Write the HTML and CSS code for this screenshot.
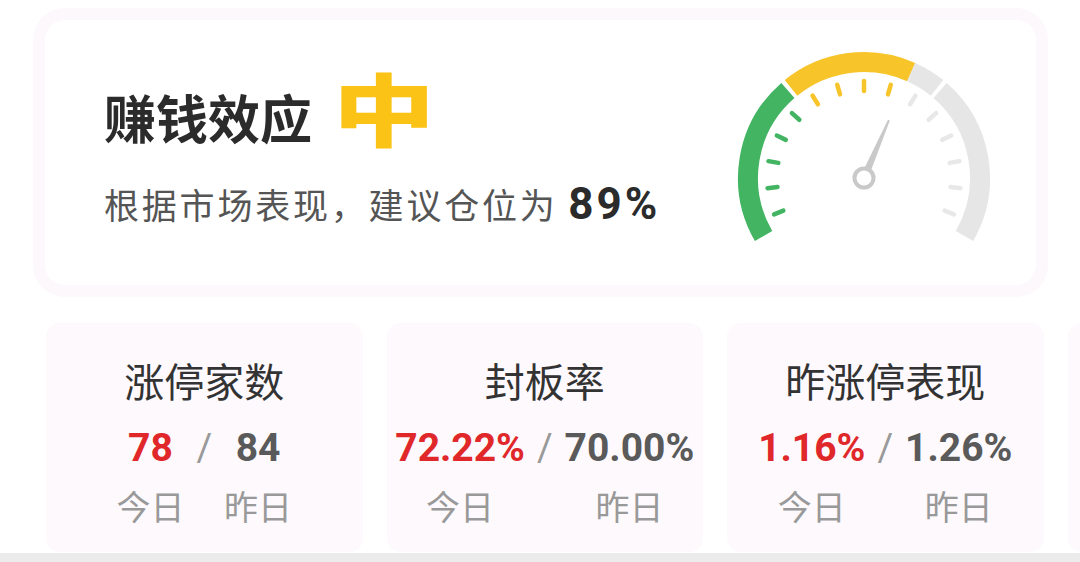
FILE: index.html
```html
<!DOCTYPE html>
<html>
    <head>
        <meta charset = utf-8>
        <meta name = viewport content = 'width = device-width, initial-scale = 1'>
        <title>赚钱效应</title>

        <link rel="stylesheet" href="styles.css">
    </head>

    <body>
        <section class = effect-wrap>
            <div class = effect>
                <div class = effect-text>
                    <div class = title-row>
                        <h1 class = title>赚钱效应</h1>
                        <span class = level>中</span>
                    </div>
                    <p class = advice>根据市场表现，建议仓位为 <b class = percent>89%</b></p>
                </div>

                <svg class = gauge width = 260 height = 200 viewBox = '0 0 260 200'>
                    <g fill = none stroke-width = 20>
                        <path d = 'M29.54 188 A116 116 0 0 1 53.89 42.45' stroke = '#42b462' />
                        <path d = 'M57.00 39.86 A116 116 0 0 1 177.18 24.03' stroke = '#f7c42a' />
                        <path d = 'M177.18 24.03 A116 116 0 0 1 203.00 39.86' stroke = '#e6e6e6' />
                        <path d = 'M206.11 42.45 A116 116 0 0 1 230.46 188' stroke = '#e6e6e6' />
                    </g>
                    <g stroke-width = '4.5' stroke-linecap = round>
                        <g stroke = '#42b462'>
                            <line x1 = '130' y1 = '33' x2 = '130' y2 = '43' transform = 'rotate(-112 130 130)' />
                            <line x1 = '130' y1 = '33' x2 = '130' y2 = '43' transform = 'rotate(-96 130 130)' />
                            <line x1 = '130' y1 = '33' x2 = '130' y2 = '43' transform = 'rotate(-80 130 130)' />
                            <line x1 = '130' y1 = '33' x2 = '130' y2 = '43' transform = 'rotate(-64 130 130)' />
                            <line x1 = '130' y1 = '33' x2 = '130' y2 = '43' transform = 'rotate(-48 130 130)' />
                        </g>
                        <g stroke = '#f7c42a'>
                            <line x1 = '130' y1 = '33' x2 = '130' y2 = '43' transform = 'rotate(-32 130 130)' />
                            <line x1 = '130' y1 = '33' x2 = '130' y2 = '43' transform = 'rotate(-16 130 130)' />
                            <line x1 = '130' y1 = '33' x2 = '130' y2 = '43' />
                            <line x1 = '130' y1 = '33' x2 = '130' y2 = '43' transform = 'rotate(16 130 130)' />
                        </g>
                        <g stroke = '#e8e8e8'>
                            <line x1 = '130' y1 = '33' x2 = '130' y2 = '43' transform = 'rotate(32 130 130)' />
                            <line x1 = '130' y1 = '33' x2 = '130' y2 = '43' transform = 'rotate(48 130 130)' />
                            <line x1 = '130' y1 = '33' x2 = '130' y2 = '43' transform = 'rotate(64 130 130)' />
                            <line x1 = '130' y1 = '33' x2 = '130' y2 = '43' transform = 'rotate(80 130 130)' />
                            <line x1 = '130' y1 = '33' x2 = '130' y2 = '43' transform = 'rotate(96 130 130)' />
                            <line x1 = '130' y1 = '33' x2 = '130' y2 = '43' transform = 'rotate(112 130 130)' />
                        </g>
                    </g>
                    <polygon points = '126.5 121 133.5 121 131 67 129 67' fill = '#c9c9c9' transform = 'rotate(23.3 130 130)' />
                    <circle cx = '130' cy = '130' r = '9.5' fill = '#fff' stroke = '#c9c9c9' stroke-width = '4' />
                </svg>
            </div>
        </section>

        <div class = stats>
            <div class = card>
                <h3 class = card-title>涨停家数</h3>
                <div class = values>
                    <div class = col><span class = 'num up'>78</span><span class = label>今日</span></div>
                    <span class = slash>/</span>
                    <div class = col><span class = num>84</span><span class = label>昨日</span></div>
                </div>
            </div>
            <div class = card>
                <h3 class = card-title>封板率</h3>
                <div class = values>
                    <div class = col><span class = 'num up'>72.22%</span><span class = label>今日</span></div>
                    <span class = slash>/</span>
                    <div class = col><span class = num>70.00%</span><span class = label>昨日</span></div>
                </div>
            </div>
            <div class = card>
                <h3 class = card-title>昨涨停表现</h3>
                <div class = values>
                    <div class = col><span class = 'num up'>1.16%</span><span class = label>今日</span></div>
                    <span class = slash>/</span>
                    <div class = col><span class = num>1.26%</span><span class = label>昨日</span></div>
                </div>
            </div>
            <div class = card></div>
        </div>

        <div class = bottom-bar></div>
    </body>
</html>
```

FILE: styles.css
```css
html {
    font-family: "Noto Sans CJK SC", sans-serif;
    background: #fff;
}

body {
    margin: 0;
    height: 562px;
    overflow: hidden;
}

.effect-wrap {
    box-sizing: border-box;
    width: 1015px;
    margin: 8px 0 0 33px;
    padding: 12px;
    background: #fcf8fc;
    border-radius: 32px;
}

.effect {
    display: flex;
    align-items: flex-start;
    height: 265px;
    background: #fff;
    border-radius: 20px;
}

.effect-text {
    padding: 45px 0 0 59px;
}

.title-row {
    display: flex;
    align-items: baseline;
}

.title {
    margin: 0;
    font-size: 52px;
    line-height: 1;
    font-weight: bold;
    color: #2b2b2b;
}

.level {
    display: inline-block;
    margin-left: 21px;
    font-size: 79px;
    line-height: 1;
    font-weight: 900;
    color: #fbc316;
    transform: scaleX(1.29) translateY(2px);
    transform-origin: left;
}

.advice {
    margin: 34px 0 0;
    font-size: 35px;
    line-height: 1.2;
    letter-spacing: 2.8px;
    color: #555;
}

.percent {
    font-family: Roboto, sans-serif;
    font-size: 44px;
    letter-spacing: 3px;
    color: #2b2b2b;
}

.gauge {
    margin: 28px 42px 0 auto;
}

.stats {
    display: flex;
    gap: 24px;
    margin-top: 26px;
    padding-left: 46px;
    overflow: hidden;
}

.card {
    flex: 0 0 316.5px;
    height: 229px;
    padding-top: 33px;
    box-sizing: border-box;
    background: #fdf9fd;
    border-radius: 14px;
    text-align: center;
}

.card-title {
    margin: 0;
    font-size: 40px;
    line-height: 1.2;
    font-weight: normal;
    color: #333;
}

.values {
    display: flex;
    justify-content: center;
    margin-top: 19px;
}

.col {
    display: flex;
    flex-direction: column;
    align-items: center;
}

.num {
    font-family: Roboto, sans-serif;
    font-size: 39px;
    line-height: 50px;
    font-weight: bold;
    color: #5a5a5a;
}

.num.up {color: #e0282a}

.slash {
    padding: 0 12px;
    font-family: Roboto, sans-serif;
    font-size: 38px;
    line-height: 50px;
    color: #999;
}

.label {
    margin-top: 13px;
    font-size: 34px;
    line-height: 1.2;
    color: #999;
}

.bottom-bar {
    height: 10px;
    margin-top: 1px;
    background: #ebebeb;
}
```
